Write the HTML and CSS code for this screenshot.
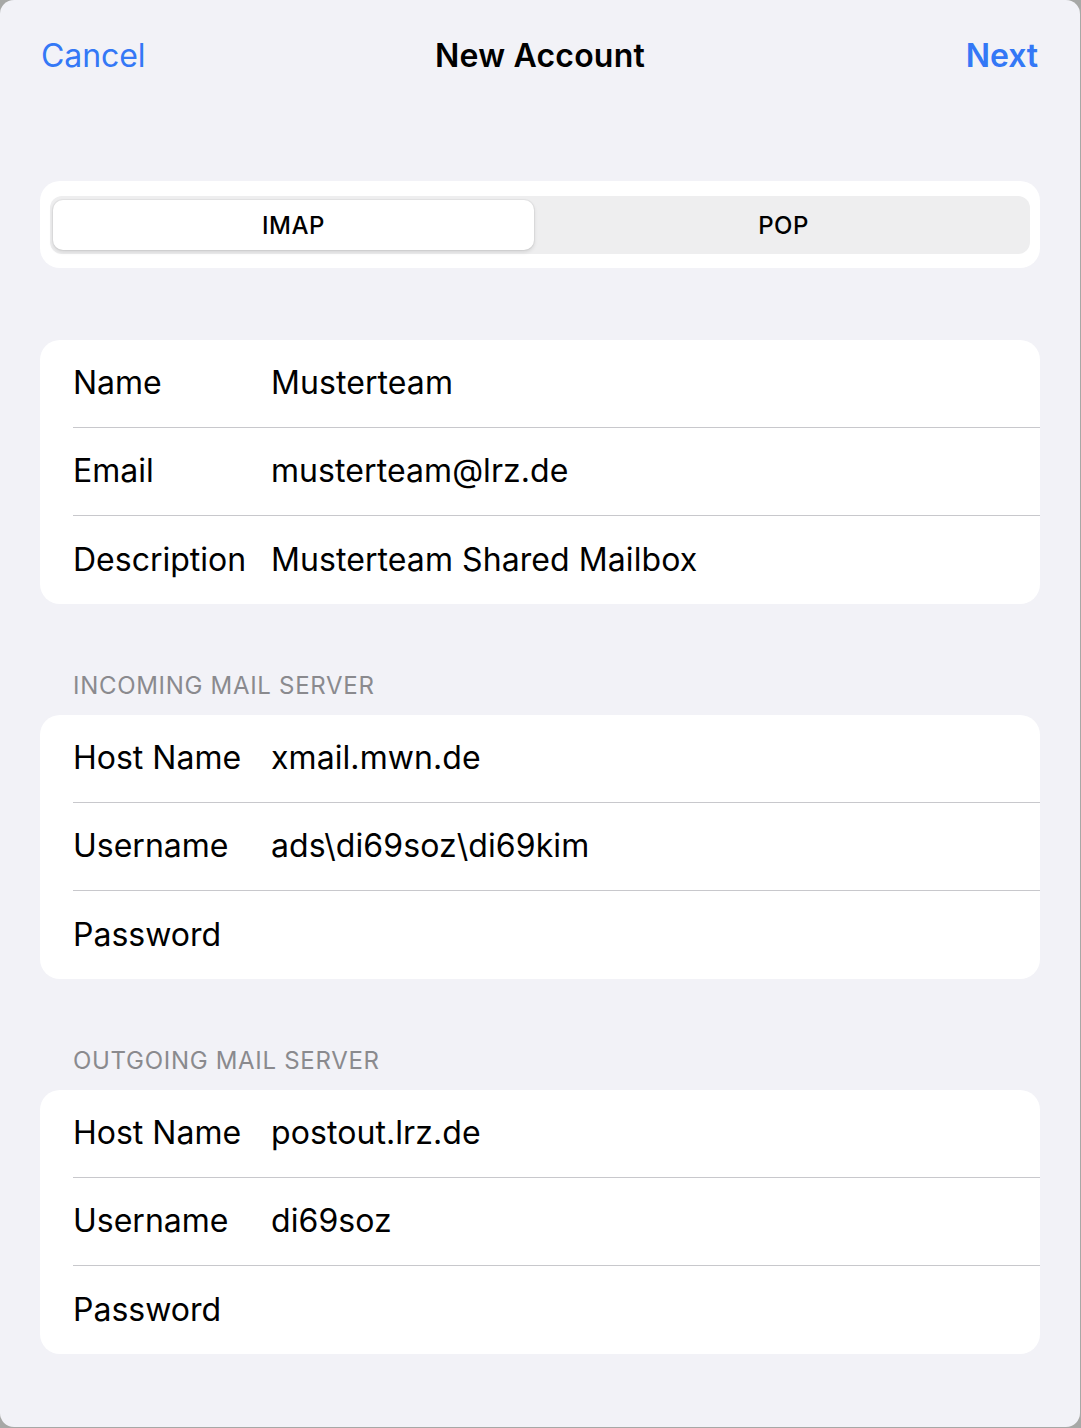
FILE: index.html
```html
<!DOCTYPE html>
<html lang="en">
<head>
<meta charset="utf-8">
<title>New Account</title>
<link rel="stylesheet" href="styles.css">
</head>
<body>
<div class="sheet">
  <header class="nav">
    <span class="nav-btn">Cancel</span>
    <span class="nav-title">New Account</span>
    <span class="nav-btn nav-next">Next</span>
  </header>
  <main class="content">
    <div class="seg-card">
      <div class="seg-track">
        <div class="seg seg-active">IMAP</div>
        <div class="seg">POP</div>
      </div>
    </div>

    <div class="group group-first">
      <div class="row"><span class="label">Name</span><span class="value">Musterteam</span></div>
      <div class="row"><span class="label">Email</span><span class="value">musterteam@lrz.de</span></div>
      <div class="row"><span class="label">Description</span><span class="value">Musterteam Shared Mailbox</span></div>
    </div>

    <div class="section-header">INCOMING MAIL SERVER</div>
    <div class="group">
      <div class="row"><span class="label">Host Name</span><span class="value">xmail.mwn.de</span></div>
      <div class="row"><span class="label">Username</span><span class="value">ads\di69soz\di69kim</span></div>
      <div class="row"><span class="label">Password</span><span class="value"></span></div>
    </div>

    <div class="section-header">OUTGOING MAIL SERVER</div>
    <div class="group">
      <div class="row"><span class="label">Host Name</span><span class="value">postout.lrz.de</span></div>
      <div class="row"><span class="label">Username</span><span class="value">di69soz</span></div>
      <div class="row"><span class="label">Password</span><span class="value"></span></div>
    </div>
  </main>
</div>
</body>
</html>
```

FILE: styles.css
```css
html, body {
  margin: 0;
  padding: 0;
}
body {
  background: #a7a8a6;
  font-family: Inter, "Liberation Sans", Arial, sans-serif;
  color: #000;
  width: 1081px;
  height: 1428px;
  overflow: hidden;
}
.sheet {
  width: 1080px;
  height: 1427px;
  background: #f2f2f7;
  border-radius: 14px;
  overflow: hidden;
}
.nav {
  height: 110px;
  padding: 0 42px 0 41px;
  display: flex;
  align-items: center;
  justify-content: space-between;
  position: relative;
}
.nav-btn {
  color: #3478f6;
  font-size: 32px;
  letter-spacing: -0.1px;
}
.nav-next {
  font-weight: 600;
}
.nav-title {
  font-size: 32px;
  font-weight: 600;
  letter-spacing: 0.2px;
  position: absolute;
  left: 0;
  right: 0;
  text-align: center;
  pointer-events: none;
}
.content {
  padding: 0 40px;
}
.seg-card {
  margin-top: 71px;
  background: #fff;
  border-radius: 20px;
  padding: 15px 10px 14px;
}
.seg-track {
  background: #eeeeef;
  border-radius: 12px;
  height: 58px;
  box-sizing: border-box;
  padding: 4px 3px;
  display: grid;
  grid-template-columns: 1fr 1fr;
}
.seg {
  display: flex;
  align-items: center;
  justify-content: center;
  font-size: 24px;
  font-weight: 500;
  letter-spacing: 0.5px;
  border-radius: 10px;
}
.seg-active {
  background: #fff;
  box-shadow: 0 2px 4px rgba(0, 0, 0, 0.12), 0 0 0 1px rgba(0, 0, 0, 0.04);
  margin-right: 6px;
}
.group {
  background: #fff;
  border-radius: 20px;
  overflow: hidden;
}
.group-first {
  margin-top: 72px;
}
.row {
  height: 88px;
  margin-left: 33px;
  display: flex;
  align-items: center;
  border-bottom: 1px solid #c8c8cc;
  box-sizing: border-box;
  font-size: 32px;
  letter-spacing: 0.08px;
  padding-bottom: 2px;
}
.row:last-child {
  border-bottom: none;
}
.label {
  width: 198px;
  flex: none;
  letter-spacing: 0;
}
.value {
  flex: 1;
}
.section-header {
  margin-top: 68px;
  padding: 0 33px 15px;
  font-size: 24px;
  line-height: 28px;
  color: #8a8a8e;
  letter-spacing: 0.7px;
}
```
